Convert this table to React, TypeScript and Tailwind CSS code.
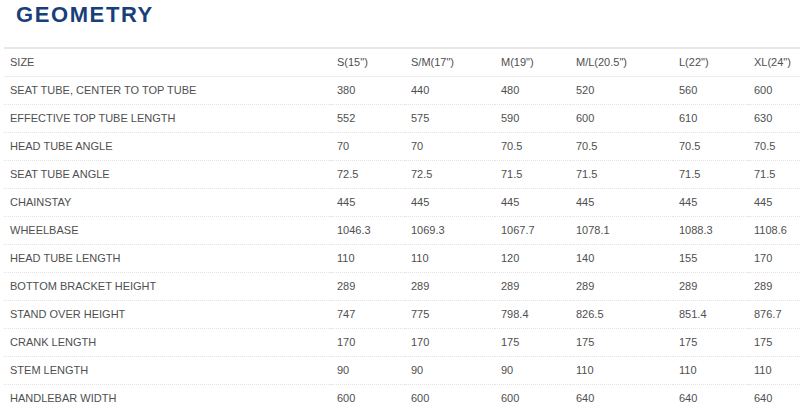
const sizes = ['S(15")', 'S/M(17")', 'M(19")', 'M/L(20.5")', 'L(22")', 'XL(24")'];

const rows: [string, string[]][] = [
    ['SEAT TUBE, CENTER TO TOP TUBE', ['380', '440', '480', '520', '560', '600']],
    ['EFFECTIVE TOP TUBE LENGTH', ['552', '575', '590', '600', '610', '630']],
    ['HEAD TUBE ANGLE', ['70', '70', '70.5', '70.5', '70.5', '70.5']],
    ['SEAT TUBE ANGLE', ['72.5', '72.5', '71.5', '71.5', '71.5', '71.5']],
    ['CHAINSTAY', ['445', '445', '445', '445', '445', '445']],
    ['WHEELBASE', ['1046.3', '1069.3', '1067.7', '1078.1', '1088.3', '1108.6']],
    ['HEAD TUBE LENGTH', ['110', '110', '120', '140', '155', '170']],
    ['BOTTOM BRACKET HEIGHT', ['289', '289', '289', '289', '289', '289']],
    ['STAND OVER HEIGHT', ['747', '775', '798.4', '826.5', '851.4', '876.7']],
    ['CRANK LENGTH', ['170', '170', '175', '175', '175', '175']],
    ['STEM LENGTH', ['90', '90', '90', '110', '110', '110']],
    ['HANDLEBAR WIDTH', ['600', '600', '600', '640', '640', '640']],
];

export default function App() {
    return (
        <div className="w-[800px] h-[416px] bg-white overflow-hidden font-['Liberation_Sans',Arial,sans-serif]">
            <h1 className="pt-1 pl-4 text-[22px] leading-[22px] font-bold tracking-[1.6px] text-[#183f7b]">GEOMETRY</h1>
            <table className="ml-1 mt-[21px] w-[796px] table-fixed border-collapse text-[11px] text-[#4f4f4f]">
                <colgroup>
                    <col className="w-[327px]" />
                    <col className="w-[74px]" />
                    <col className="w-[90px]" />
                    <col className="w-[75px]" />
                    <col className="w-[103px]" />
                    <col className="w-[75px]" />
                    <col className="w-[52px]" />
                </colgroup>
                <thead>
                    <tr className="h-[28px] border-t-2 border-b border-t-[#e8e8e8] border-b-[#ececec]">
                        <th className="px-1.5 text-left font-normal whitespace-nowrap">SIZE</th>
                        {sizes.map(s => (
                            <th key={s} className="px-1.5 text-left font-normal whitespace-nowrap">{s}</th>
                        ))}
                    </tr>
                </thead>
                <tbody>
                    {rows.map(([label, vals], i) => (
                        <tr key={label} className={`h-[28px] ${i < rows.length - 1 ? 'border-b border-dotted border-[#e2e2e2]' : ''}`}>
                            <td className="px-1.5 whitespace-nowrap">{label}</td>
                            {vals.map((v, j) => (
                                <td key={j} className="px-1.5 whitespace-nowrap">{v}</td>
                            ))}
                        </tr>
                    ))}
                </tbody>
            </table>
        </div>
    );
}
